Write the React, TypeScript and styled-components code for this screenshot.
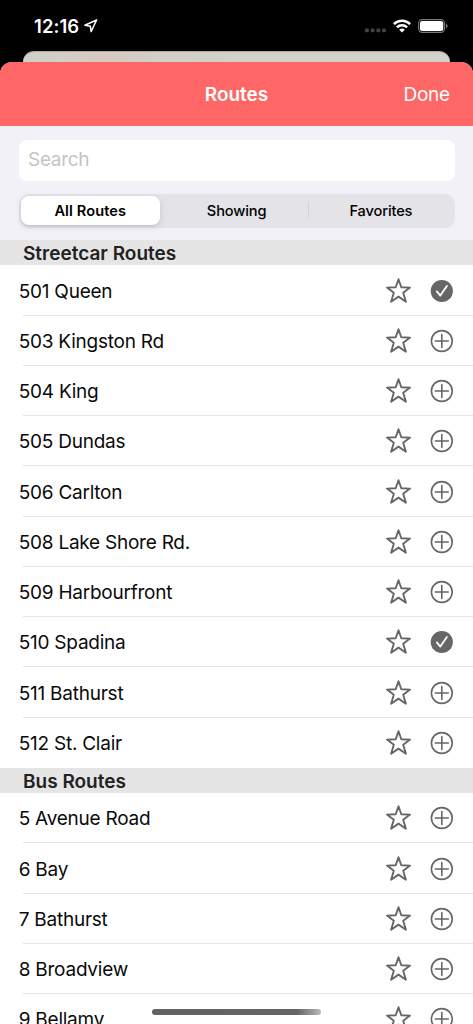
import React from "react";
import styled, { createGlobalStyle } from "styled-components";

const GlobalStyle = createGlobalStyle`
  * { box-sizing: border-box; }
  html, body { margin: 0; padding: 0; background: #000; overflow: hidden; }
  body { font-family: Inter, "Liberation Sans", sans-serif; }
  button, input { font: inherit; border: 0; padding: 0; margin: 0; background: none; color: inherit; }
`;

const Screen = styled.div`
  position: relative;
  width: 473px;
  height: 1024px;
  overflow: hidden;
  background: #000;
  display: flex;
  flex-direction: column;
`;

const StatusBar = styled.div`
  height: 50.5px;
  flex: none;
  display: flex;
  align-items: center;
  justify-content: space-between;
  padding: 2px 25px 0 34px;
  color: #fff;
`;

const Clock = styled.div`
  display: flex;
  align-items: center;
  gap: 5px;
  font-size: 18.4px;
  line-height: 22px;
  font-weight: 600;
  letter-spacing: 0.1px;
`;

const StatusIcons = styled.div`
  display: flex;
  align-items: center;
  gap: 7px;
`;

const BackCard = styled.div`
  height: 23.5px;
  flex: none;
  margin: 0 23px -12px;
  border-radius: 11px 11px 0 0;
  border-top: 1px solid #aaa9a6;
  background: linear-gradient(90deg, #d0cfca 0, #d2cec8 9%, #d8c8c0 19%, #d2cec8 30%, #d2d1cc 50%, #d2d1cc 100%);
`;

const Sheet = styled.main`
  position: relative;
  flex: 1;
  min-height: 0;
  border-radius: 12px 12px 0 0;
  overflow: hidden;
  background: #fff;
  display: flex;
  flex-direction: column;
`;

const NavBar = styled.header`
  height: 64px;
  flex: none;
  display: grid;
  grid-template-columns: 1fr auto 1fr;
  align-items: center;
  padding: 2px 23px 0;
  background: #ff6766;
  color: #fff;
`;

const Title = styled.h1`
  grid-column: 2;
  margin: 0;
  font-size: 19px;
  line-height: 24px;
  font-weight: 600;
  letter-spacing: -0.02px;
`;

const DoneButton = styled.button`
  justify-self: end;
  font-size: 19px;
  line-height: 24px;
  letter-spacing: -0.2px;
`;

const Filters = styled.div`
  height: 114px;
  flex: none;
  padding: 14px 18px 0;
  background: #f2f1f7;
`;

const SearchField = styled.input`
  display: block;
  width: 436.5px;
  height: 41px;
  margin-left: 0.5px;
  padding: 0 9.5px 2px;
  border-radius: 8px;
  background: #fff;
  font-size: 19px;
  letter-spacing: -0.3px;
  outline: none;
  &::placeholder { color: #c4c4c6; opacity: 1; }
`;

const Segments = styled.div`
  display: flex;
  align-items: center;
  width: 436px;
  height: 33.5px;
  margin: 13px 0 0 0.5px;
  padding: 2px;
  border-radius: 10px;
  background: #e4e3e8;
`;

const Segment = styled.button<{ $active?: boolean }>`
  flex: ${(p) => (p.$active ? "0 0 139.5px" : "1")};
  margin-right: ${(p) => (p.$active ? "5px" : "0")};
  height: 29px;
  border-radius: 8px;
  font-size: 14.6px;
  letter-spacing: ${(p) => (p.$active ? "0.1px" : "-0.12px")};
  color: #000;
  font-weight: ${(p) => (p.$active ? 600 : 500)};
  background: ${(p) => (p.$active ? "#fff" : "transparent")};
  box-shadow: ${(p) => (p.$active ? "0 2px 6px rgba(0,0,0,.13), 0 1px 1px rgba(0,0,0,.05)" : "none")};
`;

const SegmentDivider = styled.span`
  width: 1px;
  height: 17px;
  background: #d2d1d7;
`;

const SectionHeader = styled.h2`
  flex: none;
  height: 25.25px;
  margin: 0;
  padding: 1px 23px 0;
  background: #e5e5e5;
  color: #222;
  font-size: 19px;
  line-height: 26px;
  font-weight: 600;
  letter-spacing: 0;
`;

const RouteList = styled.ul`
  flex: none;
  margin: 0;
  padding: 0;
  list-style: none;
`;

const Route = styled.li`
  display: flex;
  align-items: center;
  height: 50.25px;
  padding: 0.6px 19px 0;
  background: linear-gradient(#e5e5e6, #e5e5e6) 23px 100% / 100% 1px no-repeat;
  &:last-child { background: none; }
`;

const RouteName = styled.span`
  flex: 1;
  padding-top: 1.7px;
  margin-left: -0.3px;
  font-size: 19px;
  line-height: 24px;
  letter-spacing: -0.24px;
  color: #0a0a0a;
`;

const IconButton = styled.button`
  display: flex;
  margin-left: 18px;
`;

const HomeIndicator = styled.div`
  position: absolute;
  left: 152px;
  bottom: 9.5px;
  width: 169px;
  height: 5.5px;
  border-radius: 3px;
  background: linear-gradient(90deg, #626262, #656565 86%, #b9b9b9);
`;

const Star = () => (
  <svg width="27" height="26" viewBox="0 0 27 26" fill="none" stroke="#666" strokeWidth="1.9" strokeLinejoin="round">
    <path d="M13.5 1.2 16.3 9.3 25 9.6 18.2 14.8 20.9 23.7 13.5 18.6 6.1 23.7 8.8 14.8 2 9.6 10.7 9.3Z" />
  </svg>
);

const Toggle = ({ on }: { on?: boolean }) => (
  <svg width="24" height="24" viewBox="0 0 24 24" fill="none" strokeLinecap="round" strokeLinejoin="round">
    <circle cx="11.8" cy="12" r={on ? 11.1 : 10.4} fill={on ? "#666" : "none"} stroke={on ? "none" : "#666"} strokeWidth="1.6" />
    {on ? (
      <path d="m6.8 12.4 3.5 4.2 6.6-9.6" stroke="#fff" strokeWidth="1.8" />
    ) : (
      <path d="M11.8 5.5v13M5.3 12h13" stroke="#666" strokeWidth="1.6" />
    )}
  </svg>
);

const LocationArrow = () => (
  <svg width="14" height="14" viewBox="0 0 14 14" fill="none" stroke="#fff" strokeWidth="1.5" strokeLinejoin="round">
    <path d="M12.6 1 .9 6.2 6.3 7.2 7.1 12.6Z" />
  </svg>
);

const Cellular = () => (
  <svg width="21" height="14" viewBox="0 0 21 14" fill="#424242">
    {[0, 5.7, 11.4, 17.1].map((x) => (
      <rect key={x} x={x} y="9.4" width="3.8" height="3.8" rx="1" />
    ))}
  </svg>
);

const Wifi = () => (
  <svg width="18" height="14" viewBox="0 0 18 14" fill="none" stroke="#fff" strokeWidth="2.5">
    <path d="M.9 5.1a11.7 11.7 0 0 1 16.2 0M3.9 8.4a7.4 7.4 0 0 1 10.2 0" />
    <path d="M9 13.6 6.2 10.8a4 4 0 0 1 5.6 0Z" fill="#fff" stroke="none" />
  </svg>
);

const Battery = () => (
  <svg width="30" height="14" viewBox="0 0 30 14">
    <rect x=".6" y=".6" width="26" height="12.8" rx="3.8" fill="none" stroke="#777" strokeWidth="1.1" />
    <rect x="1.9" y="1.9" width="23.4" height="10.2" rx="2.5" fill="#fff" />
    <path d="M28 4.8c2.2.8 2.2 3.6 0 4.4Z" fill="#777" />
  </svg>
);

type RouteItem = { name: string; showing?: boolean };

const sections: { title: string; routes: RouteItem[] }[] = [
  {
    title: "Streetcar Routes",
    routes: [
      { name: "501 Queen", showing: true },
      { name: "503 Kingston Rd" },
      { name: "504 King" },
      { name: "505 Dundas" },
      { name: "506 Carlton" },
      { name: "508 Lake Shore Rd." },
      { name: "509 Harbourfront" },
      { name: "510 Spadina", showing: true },
      { name: "511 Bathurst" },
      { name: "512 St. Clair" },
    ],
  },
  {
    title: "Bus Routes",
    routes: [
      { name: "5 Avenue Road" },
      { name: "6 Bay" },
      { name: "7 Bathurst" },
      { name: "8 Broadview" },
      { name: "9 Bellamy" },
    ],
  },
];

export default function App() {
  return (
    <Screen>
      <GlobalStyle />
      <StatusBar>
        <Clock>
          12:16
          <LocationArrow />
        </Clock>
        <StatusIcons>
          <Cellular />
          <Wifi />
          <Battery />
        </StatusIcons>
      </StatusBar>
      <BackCard />
      <Sheet>
        <NavBar>
          <Title>Routes</Title>
          <DoneButton>Done</DoneButton>
        </NavBar>
        <Filters>
          <SearchField placeholder="Search" />
          <Segments>
            <Segment $active>All Routes</Segment>
            <Segment>Showing</Segment>
            <SegmentDivider />
            <Segment>Favorites</Segment>
          </Segments>
        </Filters>
        {sections.map((section) => (
          <React.Fragment key={section.title}>
            <SectionHeader>{section.title}</SectionHeader>
            <RouteList>
              {section.routes.map((route) => (
                <Route key={route.name}>
                  <RouteName>{route.name}</RouteName>
                  <IconButton aria-label="Favorite">
                    <Star />
                  </IconButton>
                  <IconButton aria-label="Show route">
                    <Toggle on={route.showing} />
                  </IconButton>
                </Route>
              ))}
            </RouteList>
          </React.Fragment>
        ))}
      </Sheet>
      <HomeIndicator />
    </Screen>
  );
}
